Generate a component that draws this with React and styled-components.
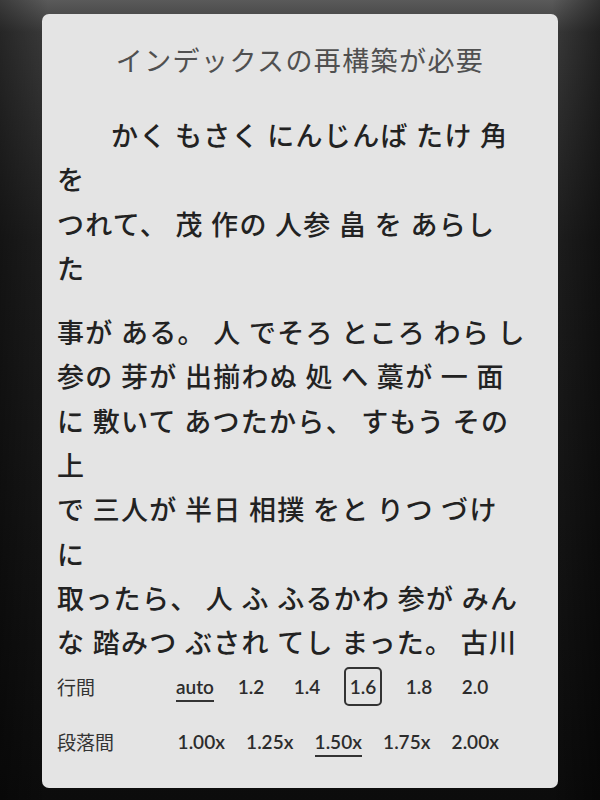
import React from "react";
import styled, { createGlobalStyle } from "styled-components";

const GlobalStyle = createGlobalStyle`
  html, body {
    margin: 0;
    padding: 0;
    background: #141414;
  }
  body {
    font-family: "Noto Sans CJK JP", "Noto Sans", sans-serif;
  }
`;

const Bezel = styled.div`
  width: 600px;
  height: 800px;
  box-sizing: border-box;
  padding: 14px 42px 12px 42px;
  background:
    linear-gradient(90deg, rgba(0, 0, 0, 0.35) 0%, rgba(0, 0, 0, 0) 8%, rgba(0, 0, 0, 0) 92%, rgba(0, 0, 0, 0.45) 100%),
    linear-gradient(180deg, #5a5a5a 0%, #3a3a3a 4%, #1e1e1e 30%, #0c0c0c 100%);
`;

const Screen = styled.div`
  height: 774px;
  box-sizing: border-box;
  padding: 24px 15px 0 15px;
  background: #e4e4e4;
  border-radius: 7px;
  display: flex;
  flex-direction: column;
  overflow: hidden;
`;

const Title = styled.div`
  font-size: 27px;
  line-height: 44px;
  letter-spacing: 1.4px;
  color: #505050;
  text-align: center;
  font-weight: 400;
  margin-bottom: 31px;
`;

const Paragraph = styled.div`
  margin-bottom: ${(p) => p.$gap || 0}px;
`;

const Line = styled.div`
  font-size: 27px;
  line-height: 44.3px;
  letter-spacing: 1.3px;
  font-weight: 500;
  color: #222;
  white-space: pre;
  padding-left: ${(p) => (p.$indent ? "54px" : "0")};
`;

const Settings = styled.div`
  display: flex;
  flex-direction: column;
  gap: 15px;
  margin-top: 2px;
`;

const Row = styled.div`
  display: flex;
  align-items: center;
  height: 40px;
`;

const Label = styled.div`
  width: 110px;
  font-size: 19px;
  color: #333;
`;

const Option = styled.div`
  width: ${(p) => p.$w}px;
  display: flex;
  justify-content: center;
  align-items: center;
`;

const OptionText = styled.span`
  font-family: "Lato", "Noto Sans", sans-serif;
  font-size: 19px;
  font-weight: 600;
  color: #2c2c2c;
  line-height: 24px;
  box-sizing: border-box;
  ${(p) =>
    p.$underline &&
    `
    border-bottom: 2px solid #333;
    padding-bottom: 1px;
    margin-top: 3px;
  `}
  ${(p) =>
    p.$boxed &&
    `
    border: 2px solid #333;
    border-radius: 5px;
    width: 38px;
    height: 39px;
    display: flex;
    align-items: center;
    justify-content: center;
  `}
`;

const paragraphs = [
  [
    "かく もさく にんじんば たけ 角",
    "を",
    "つれて、 茂 作の 人参 畠 を あらし",
    "た",
  ],
  [
    "事が ある。 人 でそろ ところ わら し",
    "参の 芽が 出揃わぬ 処 へ 藁が 一 面",
    "に 敷いて あつたから、 すもう その",
    "上",
    "で 三人が 半日 相撲 をと りつ づけ",
    "に",
    "取ったら、 人 ふ ふるかわ 参が みん",
    "な 踏みつ ぶされ てし まった。 古川",
  ],
];

const lineHeights = ["auto", "1.2", "1.4", "1.6", "1.8", "2.0"];
const paraSpacings = ["1.00x", "1.25x", "1.50x", "1.75x", "2.00x"];

export default function App() {
  return (
    <>
      <GlobalStyle />
      <Bezel>
        <Screen>
          <Title>インデックスの再構築が必要</Title>
          {paragraphs.map((lines, i) => (
            <Paragraph key={i} $gap={i === 0 ? 20 : 0}>
              {lines.map((l, j) => (
                <Line key={j} $indent={i === 0 && j === 0}>
                  {l}
                </Line>
              ))}
            </Paragraph>
          ))}
          <Settings>
            <Row>
              <Label>行間</Label>
              {lineHeights.map((v) => (
                <Option key={v} $w={56}>
                  <OptionText $underline={v === "auto"} $boxed={v === "1.6"}>
                    {v}
                  </OptionText>
                </Option>
              ))}
            </Row>
            <Row>
              <Label>段落間</Label>
              {paraSpacings.map((v) => (
                <Option key={v} $w={68.5}>
                  <OptionText $underline={v === "1.50x"}>{v}</OptionText>
                </Option>
              ))}
            </Row>
          </Settings>
        </Screen>
      </Bezel>
    </>
  );
}
